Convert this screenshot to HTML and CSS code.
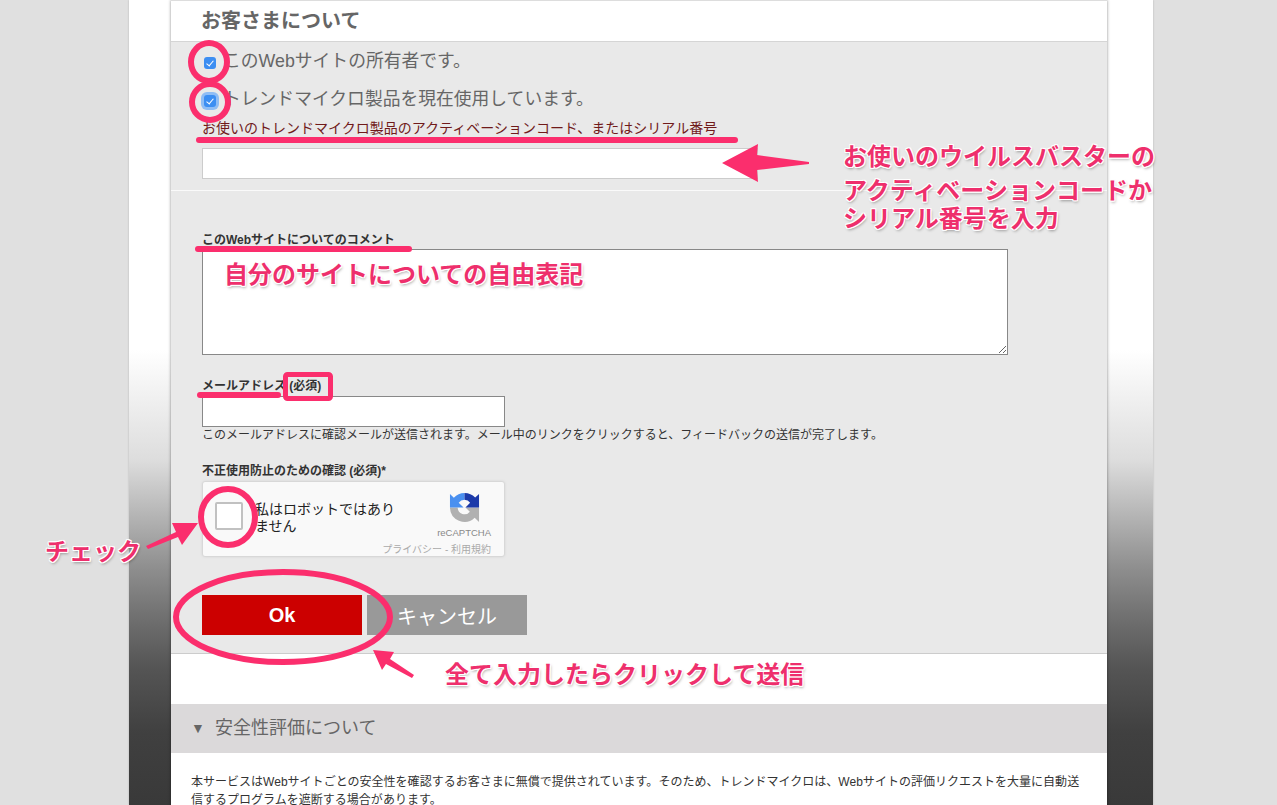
FILE: index.html
```html
<!DOCTYPE html>
<html lang="ja">

<head>
    <meta charset="UTF-8">
    <meta name="viewport" content="width=device-width, initial-scale=1.0">
    <title>フィードバック</title>
    <link rel="stylesheet" href="styles.css">
</head>

<body>
    <div class="page">
        <div class="panel">
            <h2 class="heading">お客さまについて</h2>

            <form class="form">
                <div class="section section-owner">
                    <label class="option"><input type="checkbox" checked>このWebサイトの所有者です。</label>
                    <label class="option"><input type="checkbox" class="focused" checked>トレンドマイクロ製品を現在使用しています。</label>
                    <label class="code-label" for="code">お使いのトレンドマイクロ製品のアクティベーションコード、またはシリアル番号</label>
                    <input class="code-input" id="code" type="text">
                </div>

                <div class="section section-main">
                    <label class="label" for="comment">このWebサイトについてのコメント</label>
                    <textarea class="comment" id="comment"></textarea>

                    <label class="label label-mail" for="mail">メールアドレス (必須)</label>
                    <input class="mail" id="mail" type="text">
                    <p class="help">このメールアドレスに確認メールが送信されます。メール中のリンクをクリックすると、フィードバックの送信が完了します。</p>

                    <div class="label label-captcha">不正使用防止のための確認 (必須)*</div>
                    <div class="captcha">
                        <span class="captcha-box"></span>
                        <span class="captcha-text">私はロボットではありません</span>
                        <div class="captcha-brand">
                            <svg class="captcha-logo" viewBox="0 0 32 32" width="31" height="31">
                                <path fill="#b1b1b1" d="M1 16h8a7 7 0 0 0 12.500 4.300L17 16h14v15l-4.500-4.500A15 15 0 0 1 1 16z"/>
                                <path fill="#4a90f0" d="M16 1a15 15 0 0 0-11 5L1 2v14h14l-5-5a7.500 7.500 0 0 1 6-3z"/>
                                <path fill="#1c3aa9" d="M16 1a15 15 0 0 1 11 4.700L31 2v14H17l4.800-4.800A7.500 7.500 0 0 0 16 8z"/>
                            </svg>
                            <div class="captcha-name">reCAPTCHA</div>
                            <div class="captcha-links">プライバシー - 利用規約</div>
                        </div>
                    </div>

                    <div class="buttons">
                        <button class="button button-ok" type="button">Ok</button>
                        <button class="button button-cancel" type="button">キャンセル</button>
                    </div>
                </div>
            </form>

            <div class="spacer"></div>

            <div class="accordion"><span class="accordion-mark">▼</span>安全性評価について</div>
            <p class="about">本サービスはWebサイトごとの安全性を確認するお客さまに無償で提供されています。そのため、トレンドマイクロは、Webサイトの評価リクエストを大量に自動送信するプログラムを遮断する場合があります。</p>
        </div>
    </div>

    <!-- annotations on top of the screenshot -->
    <svg class="marks" width="1277" height="805" viewBox="0 0 1277 805">
        <g fill="none" stroke="#fb2e6d" stroke-width="6">
            <ellipse cx="209" cy="62" rx="18" ry="19"/>
            <ellipse cx="210" cy="102" rx="18" ry="18"/>
            <ellipse cx="228" cy="517" rx="27" ry="28"/>
            <ellipse cx="283" cy="617" rx="107" ry="45"/>
            <rect x="285.500" y="374.500" width="45" height="24" rx="2" stroke-width="5"/>
        </g>
        <g stroke="#fb2e6d" stroke-width="6" stroke-linecap="round">
            <line x1="199" y1="140" x2="735" y2="140"/>
            <line x1="198" y1="249" x2="409" y2="249"/>
            <line x1="200" y1="395" x2="278" y2="395"/>
        </g>
        <g fill="#fb2e6d">
            <polygon points="722,163 758,144 757,155 809,162 809,164 757,170 758,182"/>
            <polygon points="198,523 172,523 176,532 146,546 148,549 178,537 182,545"/>
            <polygon points="373,650 394,652 390,659 414,675 412,678 386,664 382,670"/>
        </g>
    </svg>
    <span class="note note-code">
        <span class="note-line">お使いのウイルスバスターの</span>
        <span class="note-line">アクティベーションコードか</span>
        <span class="note-line note-line-last">シリアル番号を入力</span>
    </span>
    <span class="note note-comment">自分のサイトについての自由表記</span>
    <span class="note note-check">チェック</span>
    <span class="note note-send">全て入力したらクリックして送信</span>
</body>

</html>
```

FILE: styles.css
```css
html,
body {
    height: 100%;
}

body {
    margin: 0;
    overflow: hidden;
    position: relative;
    background-color: #e0e0e0;
    font-family: "Liberation Sans", "Noto Sans CJK JP", sans-serif;
    color: #333;
}

.page {
    width: 1024px;
    height: 805px;
    margin-left: 129px;
    padding-left: 42px;
    box-sizing: border-box;
    overflow: hidden;
    background-image: linear-gradient(to bottom, #fff 0, #fff 350px, #ddd 460px, #c0c0c0 500px, #aaa 530px, #8f8f8f 567px, #707070 617px, #555 667px, #404040 733px, #393939 805px);
    box-shadow: 0 0 2px rgba(0, 0, 0, 0.2);
}

.panel {
    width: 936px;
    min-height: 805px;
    background-color: #fff;
    border-top: 1px solid #ddd;
    box-sizing: border-box;
    box-shadow: 0 0 3px rgba(0, 0, 0, 0.45);
}

.heading {
    margin: 0;
    height: 41px;
    padding-left: 30px;
    box-sizing: border-box;
    border-bottom: 1px solid #d5d5d5;
    font-size: 20px;
    line-height: 40px;
    font-weight: bold;
    color: #666;
}

.form {
    background-color: #e9e9e9;
    border-bottom: 1px solid #ccc;
}

.section {
    padding-left: 31px;
}

.section-owner {
    height: 149px;
    box-sizing: border-box;
    border-bottom: 1px solid #fafafa;
}

.option {
    display: flex;
    align-items: center;
    height: 38px;
    padding-bottom: 4px;
    box-sizing: border-box;
    font-size: 17.800px;
    color: #666;
}

.option input {
    appearance: none;
    position: relative;
    width: 12px;
    height: 12px;
    margin: 8px 7px 0 2px;
    background-color: #3c8ef2;
    border-radius: 3px;
}

.option input::after {
    content: "";
    position: absolute;
    left: 4px;
    top: 2px;
    width: 3px;
    height: 6px;
    border: solid #fff;
    border-width: 0 1.500px 1.500px 0;
    transform: rotate(40deg);
}

.option input.focused {
    box-shadow: 0 0 0 3px #8fbdf5;
}

.code-label {
    display: block;
    height: 20px;
    font-size: 14px;
    line-height: 20px;
    color: #701a1a;
}

.code-input {
    display: block;
    width: 556px;
    height: 31px;
    margin-top: 10px;
    padding: 0;
    box-sizing: border-box;
    border: 1px solid #ccc;
    background-color: #fff;
}

.section-main {
    padding-top: 41px;
    padding-bottom: 18px;
}

.label {
    display: block;
    height: 16px;
    font-size: 12px;
    line-height: 16px;
    font-weight: bold;
    color: #333;
}

.comment {
    display: block;
    width: 806px;
    height: 106px;
    margin: 1px 0 0;
    padding: 0;
    box-sizing: border-box;
    border: 1px solid #888;
    border-radius: 0;
    background-color: #fff;
}

.label-mail {
    margin-top: 23px;
}

.mail {
    display: block;
    width: 303px;
    height: 31px;
    margin-top: 2px;
    padding: 0;
    box-sizing: border-box;
    border: 1px solid #888;
    background-color: #fff;
}

.help {
    margin: 0;
    font-size: 12px;
    line-height: 16px;
    color: #333;
}

.label-captcha {
    margin-top: 20px;
}

/* recaptcha widget */
.captcha {
    display: flex;
    width: 303px;
    height: 76px;
    margin-top: 2px;
    box-sizing: border-box;
    background-color: #f9f9f9;
    border: 1px solid #d8d8d8;
    border-radius: 3px;
    box-shadow: 0 0 3px rgba(0, 0, 0, 0.08);
}

.captcha-box {
    flex: none;
    width: 28px;
    height: 28px;
    margin: 20px 0 0 12px;
    box-sizing: border-box;
    background-color: #fff;
    border: 2px solid #c1c1c1;
    border-radius: 2px;
}

.captcha-text {
    flex: none;
    width: 142px;
    margin: 19px -40px 0 12px;
    font-size: 14px;
    line-height: 17px;
    color: #222;
}

.captcha-brand {
    flex: none;
    margin-left: auto;
    padding: 10px 13px 0 0;
    text-align: right;
}

.captcha-logo {
    display: block;
    margin: 0 11px 0 auto;
}

.captcha-name {
    margin-top: 3px;
    font-size: 9.500px;
    line-height: 14px;
    color: #888;
}

.captcha-links {
    margin-top: 3px;
    font-size: 10px;
    line-height: 14px;
    color: #aaa;
    white-space: nowrap;
}

.buttons {
    display: flex;
    gap: 5px;
    margin-top: 38px;
}

.button {
    width: 160px;
    height: 40px;
    padding: 0;
    border: none;
    color: #fff;
    font-family: inherit;
    font-size: 20px;
}

.button-ok {
    background-color: #c00;
    font-weight: bold;
}

.button-cancel {
    background-color: #999;
}

.spacer {
    height: 50px;
}

.accordion {
    height: 49px;
    padding-left: 20px;
    background-color: #dbd9da;
    font-size: 18px;
    line-height: 49px;
    color: #666;
}

.accordion-mark {
    display: inline-block;
    width: 24px;
    font-size: 14px;
    vertical-align: 1px;
}

.about {
    margin: 0;
    padding: 20px 20px 0;
    font-size: 12.030px;
    line-height: 18px;
    color: #333;
}

/* annotations */
.marks {
    position: absolute;
    left: 0;
    top: 0;
}

.note {
    position: absolute;
    font-size: 24px;
    font-weight: bold;
    color: #ee2f6c;
    white-space: nowrap;
    text-shadow: 1px 0 0 #fff, -1px 0 0 #fff, 0 1px 0 #fff, 0 -1px 0 #fff, 1px 1px 0 #fff, -1px 1px 0 #fff, 1px -1px 0 #fff, -1px -1px 0 #fff, 1px 2px 3px rgba(0, 0, 0, 0.35);
}

.note-line {
    display: block;
    height: 34px;
    line-height: 34px;
}

.note-line-last {
    height: 22px;
    line-height: 22px;
}

.note-code {
    left: 843px;
    top: 140px;
}

.note-comment {
    left: 224px;
    top: 258px;
    line-height: 34px;
}

.note-check {
    left: 45px;
    top: 535px;
    line-height: 34px;
}

.note-send {
    left: 445px;
    top: 658px;
    line-height: 34px;
}
```
